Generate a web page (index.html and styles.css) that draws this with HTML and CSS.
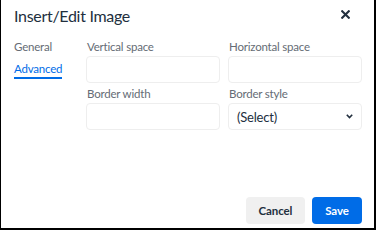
FILE: index.html
```html
<!DOCTYPE html>
<html>
<head>
<meta charset="utf-8">
<link rel="stylesheet" href="styles.css">
</head>
<body>
<div class="dialog">
  <div class="header">
    <div class="title">Insert/Edit Image</div>
    <button class="close" aria-label="Close">
      <svg width="9" height="9" viewBox="0 0 9 9"><path d="M1.2 1.2 L7.8 7.8 M7.8 1.2 L1.2 7.8" stroke="#222f3e" stroke-width="2.1" stroke-linecap="square"/></svg>
    </button>
  </div>
  <div class="body">
    <div class="tabs">
      <div class="tab">General</div>
      <div class="tab active">Advanced</div>
    </div>
    <div class="form">
      <div class="field">
        <label class="label">Vertical space</label>
        <div class="input"></div>
      </div>
      <div class="field">
        <label class="label">Horizontal space</label>
        <div class="input"></div>
      </div>
      <div class="field">
        <label class="label">Border width</label>
        <div class="input"></div>
      </div>
      <div class="field">
        <label class="label">Border style</label>
        <div class="input select">
          <span>(Select)</span>
          <svg width="7" height="5" viewBox="0 0 7 5"><path d="M0.8 0.8 L3.5 3.6 L6.2 0.8" fill="none" stroke="#222f3e" stroke-width="1.6"/></svg>
        </div>
      </div>
    </div>
  </div>
  <div class="footer">
    <button class="btn cancel">Cancel</button>
    <button class="btn save">Save</button>
  </div>
</div>
</body>
</html>
```
FILE: styles.css
```css
html, body {
  margin: 0;
  padding: 0;
  background: #fff;
}
body {
  font-family: Lato, "Noto Sans", sans-serif;
  color: #222f3e;
}
.dialog {
  width: 376px;
  height: 230px;
  box-sizing: border-box;
  border-left: 1px solid #000;
  border-right: 2px solid #000;
  border-bottom: 2px solid #000;
  display: flex;
  flex-direction: column;
}
.header {
  height: 32px;
  display: flex;
  align-items: center;
  justify-content: space-between;
  padding: 0 24px 0 13px;
}
.title {
  font-size: 16px;
  line-height: 20px;
  letter-spacing: -0.3px;
  color: #222f3e;
}
.close {
  border: 0;
  background: none;
  padding: 0;
  width: 9px;
  height: 9px;
  margin-top: -4px;
  display: flex;
}
.body {
  display: flex;
  padding: 6px 0 0 13px;
}
.tabs {
  width: 72px;
  display: flex;
  flex-direction: column;
  align-items: flex-start;
}
.tab {
  font-size: 11.5px;
  line-height: 18px;
  letter-spacing: -0.2px;
  color: #656c75;
}
.tab.active {
  margin-top: 5px;
  line-height: 16px;
  color: #006ce7;
  border-bottom: 2px solid #006ce7;
}
.form {
  display: grid;
  grid-template-columns: 134px 134px;
  column-gap: 8px;
  row-gap: 2px;
}
.label {
  display: block;
  font-size: 11.5px;
  line-height: 18px;
  letter-spacing: -0.2px;
  color: #656c75;
  padding-left: 1px;
}
.input {
  box-sizing: border-box;
  height: 27px;
  border: 1px solid #eeeeee;
  border-radius: 4px;
  background: #fff;
}
.select {
  display: flex;
  align-items: center;
  justify-content: space-between;
  padding: 0 8px 0 8px;
  font-size: 13px;
  letter-spacing: -0.2px;
  color: #222f3e;
}
.footer {
  margin-top: auto;
  display: flex;
  justify-content: flex-end;
  gap: 7px;
  padding: 0 12px 4px 0;
}
.btn {
  height: 27px;
  border: 0;
  border-radius: 4px;
  font-family: Lato, "Noto Sans", sans-serif;
  font-weight: 700;
  font-size: 11.5px;
  letter-spacing: -0.1px;
  padding: 0;
  cursor: pointer;
}
.cancel {
  width: 59px;
  background: #f0f0f0;
  color: #222f3e;
}
.save {
  width: 50px;
  background: #006ce7;
  color: #fff;
}
```
